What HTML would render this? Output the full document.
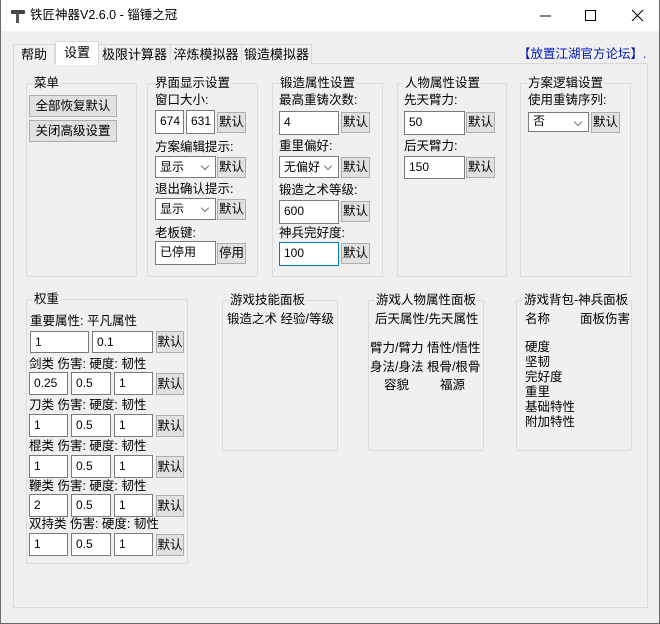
<!DOCTYPE html>
<html><head><meta charset="utf-8"><style>
*{box-sizing:border-box;margin:0;padding:0}
body{width:660px;height:624px;overflow:hidden;background:#f0f0f0;font-family:"Liberation Sans","Noto Sans CJK SC",sans-serif;font-size:12.5px;color:#000;position:relative}
.a{position:absolute;white-space:nowrap;line-height:15px}
.win{position:absolute;left:0;top:0;width:660px;height:624px;border:1px solid #6b6b6b;border-top:none}
.title{position:absolute;left:0;top:0;width:660px;height:31px;background:#fff}
.tab{position:absolute;top:44px;height:20px;border:1px solid #d9d9d9;border-bottom:none;background:#f0f0f0;text-align:center;line-height:19px;font-size:13px}
.tab.sel{top:41px;height:24px;background:#fff;z-index:2;border-color:#d9d9d9}
.page{position:absolute;left:13px;top:63px;width:635px;height:545px;border:1px solid #d9d9d9;background:#f0f0f0}
.g{position:absolute;border:1px solid #dcdcdc;border-radius:2px}
.gt{position:absolute;top:-9px;left:6px;background:#f0f0f0;padding:0 1px;line-height:16px;font-size:12.5px;white-space:nowrap}
.in{position:absolute;background:#fff;border:1px solid #7a7a7a;padding-left:4px;line-height:20px;font-size:12px}
.btn{position:absolute;background:#e1e1e1;border:1px solid #adadad;text-align:center;font-size:12.5px}
.sel2:after{content:"";position:absolute;right:7px;top:6px;width:5px;height:5px;border-right:1px solid #777;border-bottom:1px solid #777;transform:rotate(45deg)}
</style></head><body>
<div class="title"></div>
<svg class="a" style="left:10px;top:9px" width="16" height="14"><rect x="1" y="1" width="14" height="4" rx="1" fill="#444"/><rect x="6" y="4" width="3" height="10" fill="#555"/></svg>
<div class="a" style="left:30px;top:8px;font-size:12.5px">铁匠神器V2.6.0 - 锱锤之冠</div>
<svg class="a" style="left:540px;top:8px" width="110" height="16"><line x1="0" y1="8" x2="11" y2="8" stroke="#000"/><rect x="45.5" y="2.5" width="10" height="10" fill="none" stroke="#000"/><path d="M92 2 L103 13 M103 2 L92 13" stroke="#000"/></svg>
<div class="win"></div>
<div class="page"></div>
<div class="tab" style="left:13px;width:42px">帮助</div>
<div class="tab sel" style="left:55px;width:44px;line-height:22px">设置</div>
<div class="tab" style="left:98px;width:73px">极限计算器</div>
<div class="tab" style="left:170px;width:72px">淬炼模拟器</div>
<div class="tab" style="left:241px;width:71px">锻造模拟器</div>
<div class="a" style="left:518px;top:47px;color:#0018c8;font-size:12.5px">【放置江湖官方论坛】.</div>

<div class="g" style="left:26px;top:83px;width:111px;height:194px"><div class="gt">菜单</div></div>
<div class="btn" style="left:29px;top:95px;width:88px;height:22px;line-height:20px">全部恢复默认</div>
<div class="btn" style="left:29px;top:120px;width:88px;height:22px;line-height:20px">关闭高级设置</div>

<div class="g" style="left:147px;top:83px;width:111px;height:194px"><div class="gt">界面显示设置</div></div>
<div class="a" style="left:155px;top:93px">窗口大小:</div>
<div class="in" style="left:155px;top:110px;width:29px;height:24px">674</div>
<div class="in" style="left:186px;top:110px;width:29px;height:24px">631</div>
<div class="btn" style="left:217px;top:112px;width:29px;height:21px;line-height:19px">默认</div>
<div class="a" style="left:155px;top:140px">方案编辑提示:</div>
<div class="in sel2" style="left:155px;top:156px;width:61px;height:22px">显示</div>
<div class="btn" style="left:217px;top:157px;width:29px;height:21px;line-height:19px">默认</div>
<div class="a" style="left:155px;top:182px">退出确认提示:</div>
<div class="in sel2" style="left:155px;top:198px;width:61px;height:22px">显示</div>
<div class="btn" style="left:217px;top:199px;width:29px;height:21px;line-height:19px">默认</div>
<div class="a" style="left:155px;top:226px">老板键:</div>
<div class="in" style="left:155px;top:241px;width:61px;height:24px">已停用</div>
<div class="btn" style="left:217px;top:243px;width:29px;height:21px;line-height:19px">停用</div>

<div class="g" style="left:272px;top:83px;width:111px;height:194px"><div class="gt">锻造属性设置</div></div>
<div class="a" style="left:279px;top:93px">最高重铸次数:</div>
<div class="in" style="left:279px;top:111px;width:60px;height:24px">4</div>
<div class="btn" style="left:341px;top:112px;width:29px;height:21px;line-height:19px">默认</div>
<div class="a" style="left:279px;top:139px">重里偏好:</div>
<div class="in sel2" style="left:279px;top:156px;width:60px;height:22px">无偏好</div>
<div class="btn" style="left:341px;top:157px;width:29px;height:21px;line-height:19px">默认</div>
<div class="a" style="left:279px;top:183px">锻造之术等级:</div>
<div class="in" style="left:279px;top:200px;width:60px;height:24px">600</div>
<div class="btn" style="left:341px;top:201px;width:29px;height:21px;line-height:19px">默认</div>
<div class="a" style="left:279px;top:226px">神兵完好度:</div>
<div class="in" style="left:279px;top:242px;width:60px;height:24px;border-color:#0078d7">100</div>
<div class="btn" style="left:341px;top:243px;width:29px;height:21px;line-height:19px">默认</div>

<div class="g" style="left:397px;top:83px;width:110px;height:194px"><div class="gt">人物属性设置</div></div>
<div class="a" style="left:404px;top:93px">先天臂力:</div>
<div class="in" style="left:404px;top:111px;width:61px;height:24px">50</div>
<div class="btn" style="left:466px;top:112px;width:29px;height:21px;line-height:19px">默认</div>
<div class="a" style="left:404px;top:139px">后天臂力:</div>
<div class="in" style="left:404px;top:156px;width:61px;height:23px">150</div>
<div class="btn" style="left:466px;top:157px;width:29px;height:21px;line-height:19px">默认</div>

<div class="g" style="left:520px;top:83px;width:111px;height:194px"><div class="gt">方案逻辑设置</div></div>
<div class="a" style="left:528px;top:93px">使用重铸序列:</div>
<div class="in sel2" style="left:528px;top:112px;width:61px;height:20px;line-height:17px">否</div>
<div class="btn" style="left:591px;top:112px;width:29px;height:21px;line-height:19px">默认</div>

<div class="g" style="left:26px;top:299px;width:162px;height:265px"><div class="gt">权重</div></div>
<div class="a" style="left:30px;top:314px">重要属性: 平凡属性</div>
<div class="in" style="left:30px;top:331px;width:59px;height:22px">1</div>
<div class="in" style="left:92px;top:331px;width:61px;height:22px">0.1</div>
<div class="btn" style="left:156px;top:331px;width:28px;height:22px;line-height:20px">默认</div>

<div class="a" style="left:29px;top:357px">剑类 伤害: 硬度: 韧性</div>
<div class="in" style="left:29px;top:372px;width:39px;height:23px">0.25</div>
<div class="in" style="left:71px;top:372px;width:40px;height:23px">0.5</div>
<div class="in" style="left:114px;top:372px;width:39px;height:23px">1</div>
<div class="btn" style="left:156px;top:373px;width:28px;height:22px;line-height:20px">默认</div>

<div class="a" style="left:29px;top:398px">刀类 伤害: 硬度: 韧性</div>
<div class="in" style="left:29px;top:414px;width:39px;height:23px">1</div>
<div class="in" style="left:71px;top:414px;width:40px;height:23px">0.5</div>
<div class="in" style="left:114px;top:414px;width:39px;height:23px">1</div>
<div class="btn" style="left:156px;top:415px;width:28px;height:22px;line-height:20px">默认</div>

<div class="a" style="left:29px;top:439px">棍类 伤害: 硬度: 韧性</div>
<div class="in" style="left:29px;top:455px;width:39px;height:23px">1</div>
<div class="in" style="left:71px;top:455px;width:40px;height:23px">0.5</div>
<div class="in" style="left:114px;top:455px;width:39px;height:23px">1</div>
<div class="btn" style="left:156px;top:456px;width:28px;height:22px;line-height:20px">默认</div>

<div class="a" style="left:29px;top:479px">鞭类 伤害: 硬度: 韧性</div>
<div class="in" style="left:29px;top:494px;width:39px;height:23px">2</div>
<div class="in" style="left:71px;top:494px;width:40px;height:23px">0.5</div>
<div class="in" style="left:114px;top:494px;width:39px;height:23px">1</div>
<div class="btn" style="left:156px;top:495px;width:28px;height:22px;line-height:20px">默认</div>

<div class="a" style="left:29px;top:517px">双持类 伤害: 硬度: 韧性</div>
<div class="in" style="left:29px;top:533px;width:39px;height:23px">1</div>
<div class="in" style="left:71px;top:533px;width:40px;height:23px">0.5</div>
<div class="in" style="left:114px;top:533px;width:39px;height:23px">1</div>
<div class="btn" style="left:156px;top:534px;width:28px;height:22px;line-height:20px">默认</div>

<div class="g" style="left:222px;top:300px;width:116px;height:151px"><div class="gt">游戏技能面板</div></div>
<div class="a" style="left:227px;top:312px">锻造之术 经验/等级</div>

<div class="g" style="left:368px;top:300px;width:116px;height:151px"><div class="gt">游戏人物属性面板</div></div>
<div class="a" style="left:375px;top:312px">后天属性/先天属性</div>
<div class="a" style="left:370px;top:341px">臂力/臂力 悟性/悟性</div>
<div class="a" style="left:370px;top:360px">身法/身法 根骨/根骨</div>
<div class="a" style="left:384px;top:378px">容貌</div>
<div class="a" style="left:440px;top:378px">福源</div>

<div class="g" style="left:516px;top:300px;width:116px;height:151px"><div class="gt" style="left:6px">游戏背包-神兵面板</div></div>
<div class="a" style="left:525px;top:312px">名称</div>
<div class="a" style="left:580px;top:312px">面板伤害</div>
<div class="a" style="left:525px;top:340px;line-height:15px">硬度<br>坚韧<br>完好度<br>重里<br>基础特性<br>附加特性</div>
</body></html>
